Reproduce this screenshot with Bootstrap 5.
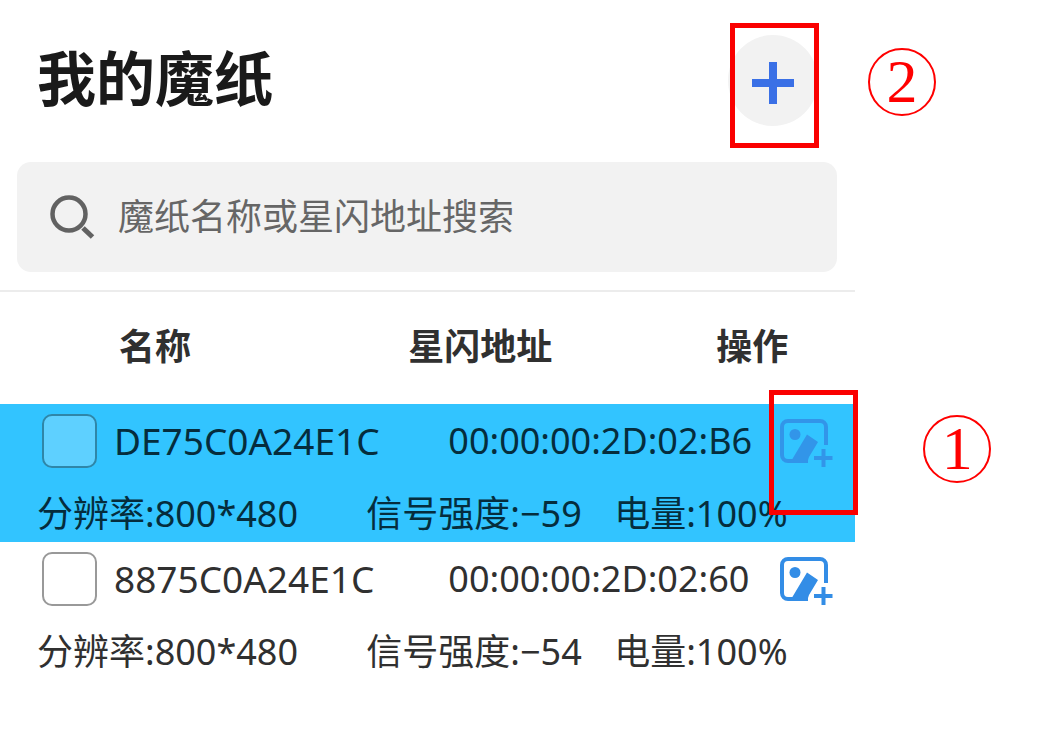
<!DOCTYPE html>
<html lang="zh-CN">
<head>
<meta charset="utf-8">
<meta name="viewport" content="width=device-width, initial-scale=1">
<title>我的魔纸</title>
<link href="https://cdn.jsdelivr.net/npm/bootstrap@5.3.0/dist/css/bootstrap.min.css" rel="stylesheet">
<style>
  body { font-family: "Noto Sans", "Noto Sans CJK SC", sans-serif; font-size: 36px; line-height: 54px; color: #303030; background: #fff; }
  .app-panel { width: 82.2%; }
  .app-head { padding: 35px 37px 36px; }
  .app-title { font: 700 59px/80px "Noto Sans CJK SC", sans-serif; color: #1a1a1a; padding-bottom: 10px; }
  .add-btn { width: 90px; height: 91px; border-radius: 50%; background: #f2f2f2; border: 0; color: #3a70e6; }
  .search-box { margin: 0 18px 18px 17px; height: 110px; border-radius: 14px; background: #f2f2f2; padding: 0 32px 0 33px; gap: 22px; }
  .search-box input { font: 400 36px/54px "Noto Sans CJK SC", sans-serif; color: #303030; margin-bottom: 7px; }
  .search-box input::placeholder { color: #666; opacity: 1; }
  .device-list { table-layout: fixed; border-top: 2px solid #ececec; white-space: nowrap; }
  .device-list th, .device-list td { padding: 0; vertical-align: middle; }
  .device-list th { height: 113px; padding-bottom: 8px; font: 700 36px/54px "Noto Sans CJK SC", sans-serif; }
  .c-name { width: 42.5%; } .c-addr { width: 29%; } .c-more { width: 18.5%; } .c-act { width: 10%; }
  .device-list th.h-name { padding-left: 119px; }
  .device-list th.h-addr { padding-left: 45px; }
  .device-list th.h-act { padding-left: 105px; }
  .line-main { height: 74px; }
  .device-list .line-info td { height: 64px; padding: 9px 0 1px 3px; }
  .device-list .line-info td:first-child { padding-left: 37px; }
  .device-list td.addr { padding-left: 85px; }
  .device-name { font-size: 37px; gap: 17px; padding-left: 42px; }
  .picked { background: #32c4ff; color: #052d3d; }
  .device-name .form-check-input { width: 55px; height: 54px; margin: 0; border: 2px solid #999; border-radius: 10px; background-color: #fff; }
  .picked .form-check-input { border-color: #2f86a8; background-color: #5ed0ff; }
  .act-btn { margin-left: 11px; padding-top: 6px; color: #338de6; }
  .picked .act-btn svg { opacity: .85; }
  /* numbered callouts drawn over the screen */
  .callout { position: absolute; width: 89px; height: 125px; border: 5px solid #fa0000; pointer-events: none; }
  .callout-add { left: 2px; top: -12px; }
  .callout-act { left: -11px; top: -23px; }
  .callout-num { position: absolute; width: 68px; height: 68px; border: 2px solid #f00; border-radius: 50%; color: #f00; font: 400 62px/62px "Liberation Serif", serif; text-align: center; }
  .callout-add .callout-num { left: 133px; top: 20px; }
  .callout-act .callout-num { left: 149px; top: 20px; }
</style>
</head>
<body>
<main class="app-panel">
  <header class="app-head d-flex justify-content-between align-items-center">
    <h1 class="app-title m-0">我的魔纸</h1>
    <div class="position-relative">
      <button type="button" class="add-btn d-flex align-items-center justify-content-center p-0 pt-1" aria-label="添加">
        <svg width="42" height="42" viewBox="0 0 42 42" stroke="currentColor" stroke-width="8"><path d="M21 0v42M0 21h42"/></svg>
      </button>
      <div class="callout callout-add"><span class="callout-num">2</span></div>
    </div>
  </header>

  <form class="search-box d-flex align-items-center" role="search">
    <svg class="flex-shrink-0" width="46" height="46" viewBox="0 0 46 46" fill="none" stroke="#626262"><circle cx="19" cy="20" r="16.500" stroke-width="4.500"/><path d="M33 34l9.500 9" stroke-width="5"/></svg>
    <input type="search" class="form-control border-0 bg-transparent shadow-none p-0" placeholder="魔纸名称或星闪地址搜索" aria-label="魔纸名称或星闪地址搜索">
  </form>

  <table class="device-list w-100">
    <colgroup><col class="c-name"><col class="c-addr"><col class="c-more"><col class="c-act"></colgroup>
    <thead>
      <tr><th class="h-name" scope="col">名称</th><th class="h-addr" scope="col">星闪地址</th><th class="h-act" scope="col" colspan="2">操作</th></tr>
    </thead>
    <tbody class="picked">
      <tr class="line-main">
        <td><div class="device-name d-flex align-items-center"><input class="form-check-input flex-shrink-0" type="checkbox" id="dev1"><label for="dev1">DE75C0A24E1C</label></div></td>
        <td class="addr" colspan="2">00:00:00:2D:02:B6</td>
        <td>
          <div class="act-btn position-relative">
            <button type="button" class="btn p-0 border-0 d-block text-reset" aria-label="添加图片">
              <svg class="d-block" width="54" height="50" viewBox="0 0 54 50" fill="none" stroke="currentColor"><path d="M28 42H8a6 6 0 0 1-6-6V8a6 6 0 0 1 6-6h32a6 6 0 0 1 6 6v18" stroke-width="4"/><path d="M43.500 30v18M34 39h18.500" stroke-width="4"/><circle cx="15" cy="15.500" r="5.500" fill="currentColor" stroke="none"/><path d="M27 15.500L38 23 29 38l-2 6H10z" fill="currentColor" stroke="none"/></svg>
            </button>
            <div class="callout callout-act"><span class="callout-num">1</span></div>
          </div>
        </td>
      </tr>
      <tr class="line-info"><td>分辨率:800*480</td><td>信号强度:−59</td><td colspan="2">电量:100%</td></tr>
    </tbody>
    <tbody>
      <tr class="line-main">
        <td><div class="device-name d-flex align-items-center"><input class="form-check-input flex-shrink-0" type="checkbox" id="dev2"><label for="dev2">8875C0A24E1C</label></div></td>
        <td class="addr" colspan="2">00:00:00:2D:02:60</td>
        <td>
          <div class="act-btn">
            <button type="button" class="btn p-0 border-0 d-block text-reset" aria-label="添加图片">
              <svg class="d-block" width="54" height="50" viewBox="0 0 54 50" fill="none" stroke="currentColor"><path d="M28 42H8a6 6 0 0 1-6-6V8a6 6 0 0 1 6-6h32a6 6 0 0 1 6 6v18" stroke-width="4"/><path d="M43.500 30v18M34 39h18.500" stroke-width="4"/><circle cx="15" cy="15.500" r="5.500" fill="currentColor" stroke="none"/><path d="M27 15.500L38 23 29 38l-2 6H10z" fill="currentColor" stroke="none"/></svg>
            </button>
          </div>
        </td>
      </tr>
      <tr class="line-info"><td>分辨率:800*480</td><td>信号强度:−54</td><td colspan="2">电量:100%</td></tr>
    </tbody>
  </table>
</main>
<script src="https://cdn.jsdelivr.net/npm/bootstrap@5.3.0/dist/js/bootstrap.bundle.min.js"></script>
</body>
</html>
